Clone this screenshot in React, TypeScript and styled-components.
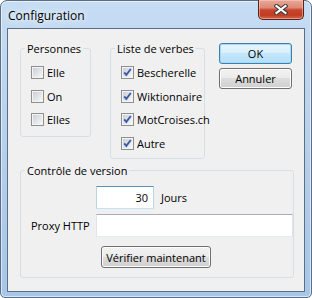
import styled, { createGlobalStyle } from "styled-components";

const GlobalStyle = createGlobalStyle`
  html, body {
    margin: 0;
    padding: 0;
    background: #ffffff;
  }

  body {
    font-family: "Open Sans", "Noto Sans", sans-serif;
    font-size: 11px;
  }
`;

const Window = styled.div`
  box-sizing: border-box;
  width: 312px;
  height: 298px;
  display: flex;
  flex-direction: column;
  padding: 0 6px 5px 6px;
  border: 1px solid #5b6e86;
  border-radius: 7px 7px 5px 5px;
  background: linear-gradient(180deg, #c6ddf4 0%, #bcd5ef 30%, #aecbea 70%, #a7c6e8 100%);
  box-shadow: inset 0 0 0 1px rgba(255, 255, 255, 0.55);
`;

const TitleBar = styled.div`
  display: flex;
  align-items: flex-start;
  justify-content: space-between;
  height: 28px;
  margin-top: -1px;
`;

const Title = styled.div`
  padding: 8px 0 0 1px;
  font-size: 12px;
  line-height: 15px;
  color: #000000;
  text-shadow: 0 0 6px rgba(255, 255, 255, 0.95), 0 0 10px rgba(255, 255, 255, 0.8);
`;

const CloseButton = styled.div`
  box-sizing: border-box;
  width: 46px;
  height: 20px;
  margin-right: 1px;
  display: flex;
  align-items: center;
  justify-content: center;
  border: 1px solid #5a2218;
  border-top: none;
  border-radius: 0 0 5px 5px;
  background: linear-gradient(180deg, #e9a898 0%, #dd8b78 40%, #c8462e 52%, #c13b20 80%, #d06a50 100%);
  box-shadow: inset 0 0 0 1px rgba(255, 220, 210, 0.45);
`;

const Client = styled.div`
  flex: 1;
  display: flex;
  flex-direction: column;
  border: 1px solid #5f6f82;
  background: #f0f0f0;
  color: #000000;
`;

const TopRow = styled.div`
  display: flex;
  align-items: flex-start;
  padding: 12px 0 0 12px;
`;

const Group = styled.fieldset<{ $width: number; $height: number; $gap?: number }>`
  box-sizing: border-box;
  width: ${(p) => p.$width}px;
  height: ${(p) => p.$height}px;
  margin: 0 ${(p) => p.$gap ?? 0}px 0 0;
  padding: 5px 0 0 10px;
  border: 1px solid #d5dfe5;
  border-radius: 3px;
  min-width: 0;
`;

const Legend = styled.legend`
  margin-left: -6px;
  padding: 0 2px;
  line-height: 15px;
`;

const CheckList = styled.div`
  display: flex;
  flex-direction: column;
`;

const CheckRow = styled.label`
  display: flex;
  align-items: center;
  gap: 3px;
  height: 23.5px;
  white-space: nowrap;

  svg {
    flex-shrink: 0;
  }
`;

const ButtonColumn = styled.div`
  display: flex;
  flex-direction: column;
  gap: 4px;
  margin-top: 2px;
`;

const Button = styled.button<{ $default?: boolean; $width: number; $height: number }>`
  box-sizing: border-box;
  width: ${(p) => p.$width}px;
  height: ${(p) => p.$height}px;
  padding: 0;
  font-family: inherit;
  font-size: 11px;
  color: #000000;
  border-radius: 3px;
  border: 1px solid ${(p) => (p.$default ? "#3c7fb1" : "#707070")};
  background: ${(p) =>
    p.$default
      ? "linear-gradient(180deg, #e6f5fd 0%, #d8f0fc 50%, #c4e7fb 50%, #b5def6 100%)"
      : "linear-gradient(180deg, #f2f2f2 0%, #ebebeb 50%, #dddddd 50%, #cfcfcf 100%)"};
  box-shadow: inset 0 0 0 1px ${(p) => (p.$default ? "#a5dbf7" : "#fcfcfc")};
`;

const VersionGroup = styled.fieldset`
  box-sizing: border-box;
  width: 274px;
  height: 115px;
  margin: 4px 0 0 12px;
  padding: 8px 0 0 10px;
  border: 1px solid #d5dfe5;
  border-radius: 3px;
  min-width: 0;
  display: grid;
  grid-template-columns: 65px 1fr;
  grid-auto-rows: min-content;
  row-gap: 5px;
  align-items: center;
`;

const FieldLabel = styled.span`
  white-space: nowrap;
`;

const Inline = styled.div`
  display: flex;
  align-items: center;
  gap: 7px;
`;

const TextBox = styled.input<{ $focus?: boolean }>`
  box-sizing: border-box;
  height: 23px;
  width: 100%;
  margin: 0;
  padding: 0 5px;
  font-family: inherit;
  font-size: 11px;
  background: #ffffff;
  border: 1px solid;
  border-color: ${(p) =>
    p.$focus ? "#5794bf #b7d5ea #c7e2f1 #b7d5ea" : "#abadb3 #e2e3ea #e3e9ef #e2e3ea"};
  outline: none;
`;

const DaysBox = styled(TextBox)`
  width: 58px;
  text-align: right;
`;

const ActionCell = styled.div`
  grid-column: 2;
  padding: 4px 0 0 5px;
`;

const CloseGlyph = () => (
  <svg width="14" height="11" viewBox="0 0 14 11">
    <path d="M2.5 2 L11.5 9 M11.5 2 L2.5 9" stroke="#3d3d3d" strokeWidth="4.2" strokeLinecap="square" />
    <path d="M2.5 2 L11.5 9 M11.5 2 L2.5 9" stroke="#ffffff" strokeWidth="2.2" strokeLinecap="square" />
  </svg>
);

const CheckBox = ({ checked }: { checked?: boolean }) => (
  <svg width="13" height="13" viewBox="0 0 13 13">
    <defs>
      <linearGradient id="boxFill" x1="0" y1="0" x2="1" y2="1">
        <stop offset="0" stopColor="#cbcfd5" />
        <stop offset="1" stopColor="#f7f7f7" />
      </linearGradient>
    </defs>
    <rect x="0.5" y="0.5" width="12" height="12" fill="#f4f4f4" stroke="#8e8f8f" />
    <rect x="2" y="2" width="9" height="9" fill="url(#boxFill)" />
    {checked && (
      <path d="M3.2 6.4 L5.3 8.9 L9.8 3" stroke="#3b5ca8" strokeWidth="1.9" fill="none" />
    )}
  </svg>
);

const personnes = ["Elle", "On", "Elles"];
const verbes = ["Bescherelle", "Wiktionnaire", "MotCroises.ch", "Autre"];

export default function App() {
  return (
    <>
      <GlobalStyle />
      <Window>
        <TitleBar>
          <Title>Configuration</Title>
          <CloseButton>
            <CloseGlyph />
          </CloseButton>
        </TitleBar>
        <Client>
          <TopRow>
            <Group $width={71} $height={96} $gap={19}>
              <Legend>Personnes</Legend>
              <CheckList>
                {personnes.map((p) => (
                  <CheckRow key={p}>
                    <CheckBox />
                    {p}
                  </CheckRow>
                ))}
              </CheckList>
            </Group>
            <Group $width={95} $height={118} $gap={14}>
              <Legend>Liste de verbes</Legend>
              <CheckList>
                {verbes.map((v) => (
                  <CheckRow key={v}>
                    <CheckBox checked />
                    {v}
                  </CheckRow>
                ))}
              </CheckList>
            </Group>
            <ButtonColumn>
              <Button $default $width={73} $height={21}>
                OK
              </Button>
              <Button $width={73} $height={21}>
                Annuler
              </Button>
            </ButtonColumn>
          </TopRow>
          <VersionGroup>
            <Legend>Contrôle de version</Legend>
            <span />
            <Inline>
              <DaysBox $focus defaultValue="30" />
              <FieldLabel>Jours</FieldLabel>
            </Inline>
            <FieldLabel>Proxy HTTP</FieldLabel>
            <TextBox />
            <ActionCell>
              <Button $width={110} $height={22}>
                Vérifier maintenant
              </Button>
            </ActionCell>
          </VersionGroup>
        </Client>
      </Window>
    </>
  );
}
